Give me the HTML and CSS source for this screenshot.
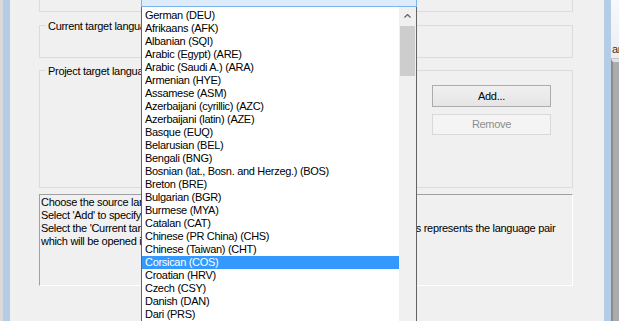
FILE: index.html
```html
<!DOCTYPE html>
<html lang="en">
<head>
  <meta charset="UTF-8">
  <title>Project languages</title>
  <link rel="stylesheet" href="styles.css">
</head>
<body>
  <div class="screen">
    <div class="desk-left"></div>
    <div class="frame"></div>

    <div class="dialog">
      <div class="group group-clipped"></div>

      <div class="group group-current">
        <span class="group-title">Current target language</span>
      </div>

      <div class="group group-project">
        <span class="group-title">Project target languages</span>
        <div class="button-column">
          <button class="btn">Add...</button>
          <button class="btn" disabled>Remove</button>
        </div>
      </div>

      <div class="help-text">
        <div>Choose the source language of the project.</div>
        <div>Select 'Add' to specify the target languages of the project.</div>
        <div>Select the 'Current target language' from the list of the target languages below. This represents the language pair</div>
        <div>which will be opened in the editor.</div>
      </div>

      <!-- open combo box list -->
      <div class="dropdown">
        <div class="combo"></div>
        <div class="list">
          <ul class="items">
            <li>German (DEU)</li>
            <li>Afrikaans (AFK)</li>
            <li>Albanian (SQI)</li>
            <li>Arabic (Egypt) (ARE)</li>
            <li>Arabic (Saudi A.) (ARA)</li>
            <li>Armenian (HYE)</li>
            <li>Assamese (ASM)</li>
            <li>Azerbaijani (cyrillic) (AZC)</li>
            <li>Azerbaijani (latin) (AZE)</li>
            <li>Basque (EUQ)</li>
            <li>Belarusian (BEL)</li>
            <li>Bengali (BNG)</li>
            <li>Bosnian (lat., Bosn. and Herzeg.) (BOS)</li>
            <li>Breton (BRE)</li>
            <li>Bulgarian (BGR)</li>
            <li>Burmese (MYA)</li>
            <li>Catalan (CAT)</li>
            <li>Chinese (PR China) (CHS)</li>
            <li>Chinese (Taiwan) (CHT)</li>
            <li class="selected">Corsican (COS)</li>
            <li>Croatian (HRV)</li>
            <li>Czech (CSY)</li>
            <li>Danish (DAN)</li>
            <li>Dari (PRS)</li>
          </ul>
          <div class="scrollbar">
            <div class="scroll-up">
              <svg width="7" height="4" viewBox="0 0 7 4">
                <polyline points="0.5,3.5 3.5,0.5 6.5,3.5" fill="none" stroke="#606060" stroke-width="1.2"/>
              </svg>
            </div>
            <div class="scroll-thumb"></div>
          </div>
        </div>
      </div>
    </div>

    <div class="frame"></div>
    <div class="peek">
      <div class="peek-top">ar</div>
      <div class="peek-body"></div>
    </div>
  </div>
</body>
</html>
```

FILE: styles.css
```css
body {
  margin: 0;
  height: 321px;
  overflow: hidden;
  background: #f0f0f0;
  font-family: "Liberation Sans", Arial, sans-serif;
  font-size: 11px;
  letter-spacing: -0.3px;
  line-height: 13px;
  color: #000;
}

.screen {
  display: flex;
  height: 321px;
}

.desk-left {
  width: 3px;
  background: #dadada;
}

.frame {
  width: 7px;
  background: #b4cce5;
}

.dialog {
  position: relative;
  flex: 1;
  background: #f0f0f0;
  padding: 0 31px 0 29px;
}

.group {
  position: relative;
  box-sizing: border-box;
  border: 1px solid #dcdcdc;
}

.group-clipped {
  border-top: none;
  height: 12px;
}

.group-current {
  margin-top: 13px;
  height: 33px;
}

.group-project {
  margin-top: 12px;
  height: 118px;
  padding: 14px 21px 0 0;
}

.group-title {
  position: absolute;
  top: -6px;
  left: 6px;
  padding: 0 2px;
  background: #f0f0f0;
  white-space: nowrap;
}

.button-column {
  display: flex;
  flex-direction: column;
  align-items: flex-end;
  gap: 7px;
}

.btn {
  box-sizing: border-box;
  width: 119px;
  height: 22px;
  margin: 0;
  padding: 0;
  font: inherit;
  letter-spacing: inherit;
  color: #000;
  background: linear-gradient(#f0f0f0, #e5e5e5);
  border: 1px solid #acacac;
}

.btn:disabled {
  height: 21px;
  color: #8d8d8d;
  background: #f4f4f4;
  border-color: #d9d9d9;
}

.help-text {
  box-sizing: border-box;
  margin-top: 6px;
  height: 92px;
  padding: 1px 0 0 1px;
  border: 1px solid;
  border-color: #a0a0a0 #ffffff #ffffff #a0a0a0;
  white-space: nowrap;
  overflow: hidden;
}

.dropdown {
  position: absolute;
  top: -15px;
  left: 131px;
  width: 276px;
}

.combo {
  box-sizing: border-box;
  height: 22px;
  background: #dcecfc;
  border: 1px solid #7eb4ea;
}

.list {
  display: flex;
  height: 314px;
  overflow: hidden;
  background: #fff;
  border: 1px solid #646464;
  border-top: none;
  border-bottom: none;
}

.items {
  flex: 1;
  margin: 0;
  padding: 2px 0 0;
  list-style: none;
}

.items li {
  height: 13px;
  padding-left: 3px;
  white-space: nowrap;
}

.items li.selected {
  background: #3399ff;
  color: #fff;
}

.scrollbar {
  width: 17px;
  background: #f0f0f0;
  display: flex;
  flex-direction: column;
}

.scroll-up {
  height: 18px;
  display: flex;
  align-items: center;
  justify-content: center;
}

.scroll-thumb {
  margin: 1px 1px 0 1px;
  height: 50px;
  background: #cdcdcd;
}

.peek {
  width: 8px;
  display: flex;
  flex-direction: column;
  overflow: hidden;
}

.peek-top {
  box-sizing: border-box;
  height: 59px;
  padding: 43px 0 0 1px;
  background: linear-gradient(#f7f9fb, #e9eef3);
  border-bottom: 1px solid #c4c4c4;
  color: #333;
  white-space: nowrap;
}

.peek-body {
  flex: 1;
  background: #ababab;
  border-top: 3px solid #e2e2e2;
  border-left: 2px solid #8c8c8c;
}
```
